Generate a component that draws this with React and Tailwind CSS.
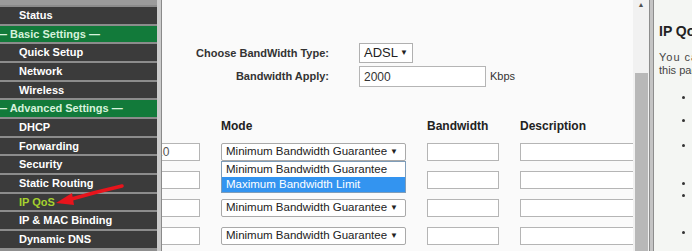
import React from 'react';

const menu = [
  { label: 'Status' },
  { label: 'Basic Settings', group: true },
  { label: 'Quick Setup' },
  { label: 'Network' },
  { label: 'Wireless' },
  { label: 'Advanced Settings', group: true },
  { label: 'DHCP' },
  { label: 'Forwarding' },
  { label: 'Security' },
  { label: 'Static Routing' },
  { label: 'IP QoS', active: true },
  { label: 'IP & MAC Binding' },
  { label: 'Dynamic DNS' },
];

const Select = ({ value, className = '' }) => (
  <div className={`h-[18px] shrink-0 flex items-center justify-between border border-[#a9a9a9] rounded-[2px] bg-white pl-[4px] pr-[7px] text-[11.5px] text-[#222] whitespace-nowrap ${className}`}>
    <span>{value}</span>
    <span className="text-[8px] leading-none">▼</span>
  </div>
);

const Input = ({ className = '', children }) => (
  <div className={`h-[18px] shrink-0 border border-[#b5b5b5] bg-white flex items-center text-[12px] text-[#555] overflow-hidden whitespace-nowrap ${className}`}>
    {children}
  </div>
);

const Sidebar = () => (
  <div className="w-[157px] shrink-0 flex flex-col bg-[#8f8f8f]">
    <div className="h-[5px] bg-[#9b9b9b]" />
    {menu.map((m) => (
      <div
        key={m.label}
        className={`h-[18.67px] shrink-0 border-t-2 border-[#8c8c8c] flex items-center text-[11px] font-bold whitespace-nowrap ${
          m.group ? 'bg-[#127a3a] text-[#d6f2dc] -ml-[4px]' : 'bg-[#3b3b3b] pl-[19px]'
        } ${m.active ? 'text-[#a6d22e]' : m.group ? '' : 'text-white'}`}
      >
        {m.group ? `— ${m.label} —` : m.label}
      </div>
    ))}
  </div>
);

const rows = [0, 1, 2, 3];

export default function App() {
  return (
    <div className="relative w-[692px] h-[251px] overflow-hidden flex bg-[#fafafa]" style={{ fontFamily: '"Liberation Sans", Arial, sans-serif' }}>
      <Sidebar />
      <div className="w-[5px] shrink-0 bg-[#cbcbcb] border-r border-[#8a8a8a]" />

      {/* main form */}
      <div className="relative w-[471px] shrink-0 overflow-hidden bg-[#fafafa]">
        <div className="pt-[43px] flex flex-col gap-[3px]">
          <div className="flex items-center h-[20px]">
            <div className="w-[167px] text-right text-[11px] font-bold text-[#333]">Choose BandWidth Type:</div>
            <div className="ml-[30px] w-[54px] h-[20px] border border-[#b0b0b0] bg-white flex items-center justify-between px-[4px] text-[13px] text-[#222]">
              <span>ADSL</span>
              <span className="text-[8px]">▼</span>
            </div>
          </div>
          <div className="flex items-center h-[21px]">
            <div className="w-[167px] text-right text-[11px] font-bold text-[#333]">Bandwidth Apply:</div>
            <div className="ml-[30px] w-[127px] h-[21px] border border-[#b5b5b5] bg-white flex items-center px-[4px] text-[12px] text-[#333]">2000</div>
            <span className="ml-[4px] text-[11px] text-[#333]">Kbps</span>
          </div>
        </div>

        <div className="mt-[31px] flex text-[12px] font-bold text-[#222] h-[16px] items-center">
          <div className="w-[59px]" />
          <div className="w-[206px]">Mode</div>
          <div className="w-[93px]">Bandwidth</div>
          <div>Description</div>
        </div>

        <div className="relative mt-[9px] flex flex-col gap-[10px]">
          {rows.map((r) => (
            <div key={r} className="flex items-center gap-[21px]">
              <Input className="w-[38px] border-l-0">
                {r === 0 && <span className="-ml-[6px]">10</span>}
              </Input>
              <Select value="Minimum Bandwidth Guarantee" className="w-[185px]" />
              <Input className="w-[72px]" />
              <Input className="w-[130px]" />
            </div>
          ))}

          {/* open dropdown list */}
          <div className="absolute left-[59px] top-[18px] w-[185px] border border-[#7f9db9] bg-white text-[11.5px] leading-[14px] text-[#222] whitespace-nowrap">
            <div className="px-[4px] h-[15px]">Minimum Bandwidth Guarantee</div>
            <div className="px-[4px] h-[15px] bg-[#3394f0] text-white">Maximum Bandwidth Limit</div>
          </div>
        </div>
      </div>

      {/* scrollbar */}
      <div className="w-[16px] shrink-0 bg-[#f1f1f1] flex flex-col items-center">
        <div className="h-[12px] text-[7px] leading-[10px] text-[#505050]">▲</div>
        <div className="mt-[61px] w-[13px] flex-1 bg-[#b8b8b8]" />
      </div>
      <div className="w-[5px] shrink-0 bg-[#c4c4c4] border-x border-[#8d8d8d]" />

      {/* help panel */}
      <div className="flex-1 bg-[#f4f6f3] pl-[5px] pt-[21px] whitespace-nowrap overflow-hidden">
        <div className="text-[14px] font-bold text-[#222]">IP QoS</div>
        <div className="mt-[9px] text-[11px] leading-[13px] text-[#444] tracking-[1px]">You can</div>
        <div className="text-[11px] leading-[13px] text-[#444]">this page</div>
        <div className="relative">
          {[95, 118, 143, 181, 193, 230].map((y) => (
            <div key={y} className="absolute left-[23px] w-[3px] h-[3px] rounded-full bg-[#333]" style={{ top: y - 76 }} />
          ))}
        </div>
      </div>

      {/* red arrow annotation */}
      <svg className="absolute left-0 top-0 pointer-events-none" width="692" height="251">
        <path d="M122 186 C100 191 85 195 68 200" stroke="#e8141c" strokeWidth="3.5" fill="none" strokeLinecap="round" />
        <polygon points="56,203 72,193 74,205" fill="#e8141c" />
      </svg>
    </div>
  );
}
